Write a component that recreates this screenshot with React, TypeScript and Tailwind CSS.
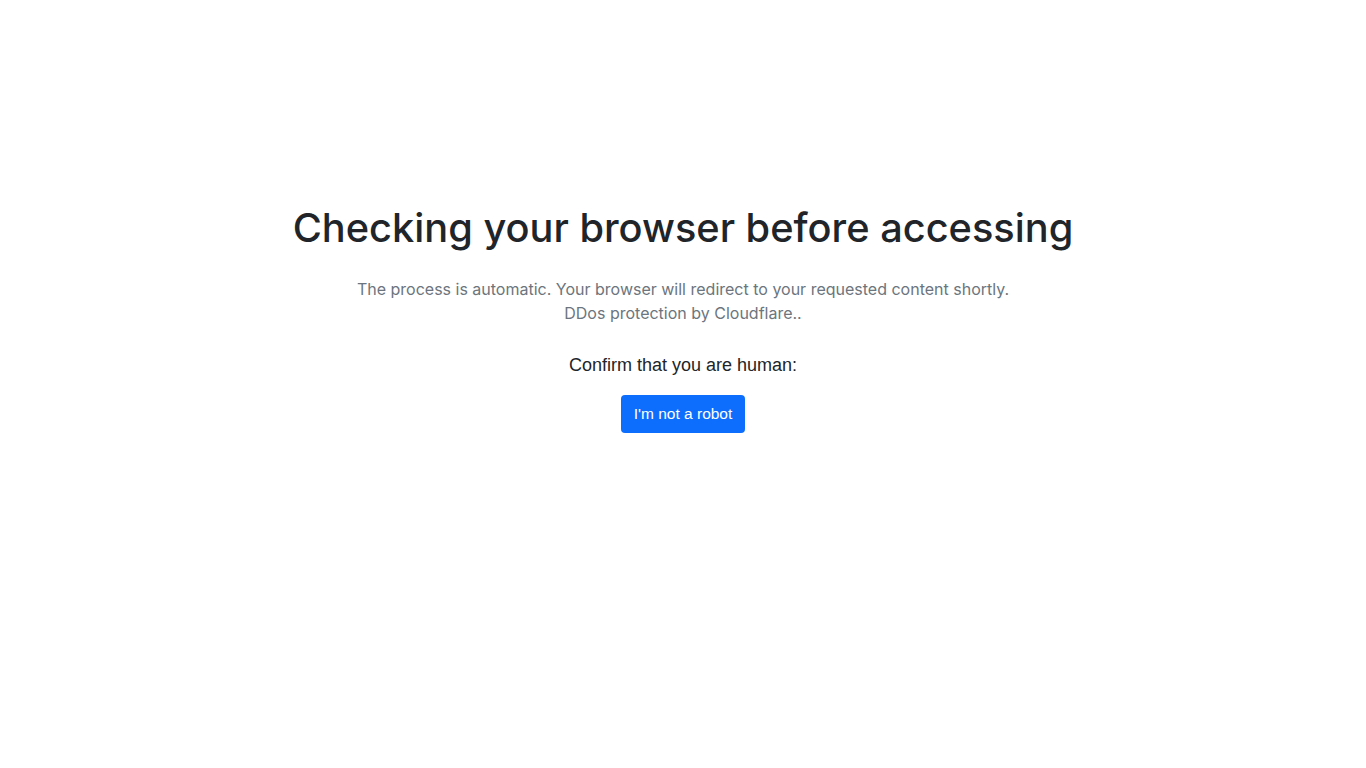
export default function App() {
  return (
    <div className="min-h-screen bg-white flex flex-col items-center pt-[200px]" style={{ fontFamily: 'Inter, "Noto Sans", sans-serif' }}>
      <h1 className="text-[39.75px] leading-[56px] font-medium text-[#212529]">
        Checking your browser before accessing
      </h1>
      <p className="mt-[21px] text-[16px] leading-[24px] text-[#6c757d] text-center">
        The process is automatic. Your browser will redirect to your requested content shortly.
        <br />
        DDos protection by Cloudflare..
      </p>
      <div className="mt-[28px] text-center" style={{ fontFamily: '"Liberation Sans", Arial, sans-serif' }}>
        <p className="text-[18px] leading-[24px] text-[#212529]">Confirm that you are human:</p>
        <button className="mt-[18px] h-[38px] px-[13px] bg-[#0d6efd] text-white text-[15.5px] rounded-[4px]">
          I'm not a robot
        </button>
      </div>
    </div>
  );
}
